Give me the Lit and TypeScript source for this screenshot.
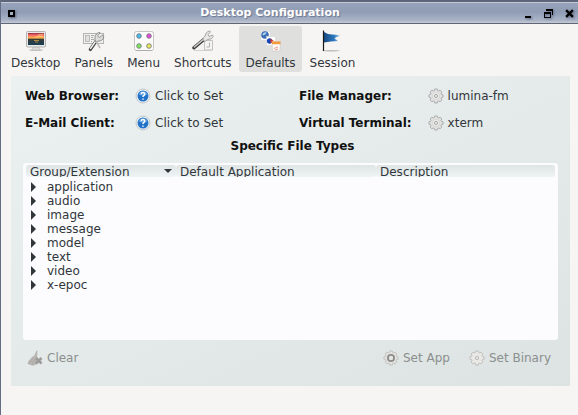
import { LitElement, html, css, TemplateResult } from "lit";
import { customElement, state } from "lit/decorators.js";
import { classMap } from "lit/directives/class-map.js";

const GEAR =
  "M6.7 1h2.6l.4 1.7 1.2.5 1.5-.9 1.8 1.8-.9 1.5.5 1.2 1.7.4v2.6l-1.7.4-.5 1.2.9 1.5-1.8 1.8-1.5-.9-1.2.5-.4 1.7H6.7l-.4-1.7-1.2-.5-1.5.9-1.8-1.8.9-1.5-.5-1.2L.5 9.8V7.2l1.7-.4.5-1.2-.9-1.5 1.8-1.8 1.5.9 1.2-.5z";

const icons: Record<string, TemplateResult> = {
  desktop: html`<svg class="big" viewBox="0 0 22 22">
    <defs>
      <linearGradient id="sky" x1="0" y1="0" x2="0" y2="1">
        <stop offset="0" stop-color="#8a2a38" /><stop offset=".15" stop-color="#f0606c" />
        <stop offset=".42" stop-color="#ffb648" /><stop offset=".52" stop-color="#3a3c34" />
        <stop offset="1" stop-color="#16405a" />
      </linearGradient>
    </defs>
    <ellipse cx="11" cy="20" rx="7" ry="1" fill="#c4c4c2" />
    <path d="M8 17h6l1 3H7z" fill="#dcdcda" stroke="#b4b4b2" stroke-width=".5" />
    <rect x="1.5" y="1.5" width="19" height="15.5" rx="1" fill="#e8e8e6" stroke="#b4b4b2" />
    <rect x="3" y="3" width="16" height="12" fill="url(#sky)" />
    <path d="M10 7.500q4-2 8-1M13 5q3 0 5-1" stroke="#ffda7a" stroke-width=".8" fill="none" />
    <path d="M9 10.500h5M10 12h3" stroke="#c89a4a" stroke-width=".8" />
  </svg>`,
  panels: html`<svg class="big" viewBox="0 0 22 22">
    <rect x=".5" y="3.5" width="20" height="10" fill="#f1f1f0" stroke="#b4b4b2" />
    <rect x="2.5" y="5.5" width="4" height="6" fill="#e0e0de" stroke="#aaa" stroke-width=".7" />
    <path d="M8 5.500h3M8 7.500h2M8 9.500h3M8 11.500h1" stroke="#999" stroke-width=".8" />
    <path d="M7.300 19.500l5.500-8" stroke="#4a4a4a" stroke-width="3.200" stroke-linecap="round" />
    <path d="M7.600 18.400l5-7.200" stroke="#efefed" stroke-width="1.600" stroke-linecap="round" />
    <path d="M12 9.5q-.8-5 3.6-7l1.600.3-2.600 3 1.600 1.800L19.800 5l1 1.800q-1 4.600-6.300 4.400l-1.500 1.400z" fill="#dededc" stroke="#858583" stroke-width=".9" />
    <path d="M13.500 12l3.500 6" stroke="#bcbcba" stroke-width="1.600" />
  </svg>`,
  menu: html`<svg class="big" viewBox="0 0 22 22">
    <rect x="1.5" y="1.5" width="19" height="19" rx="2" fill="#fbfbfb" stroke="#c4c4c2" />
    <path d="M3 20.500h16" stroke="#adadab" />
    <g stroke="#77777d" stroke-width=".9">
      <circle cx="6" cy="6" r="2.300" fill="#42bdf0" /><circle cx="16" cy="6" r="2.300" fill="#e846dc" />
      <circle cx="6" cy="16" r="2.300" fill="#7de85a" /><circle cx="16" cy="16" r="2.300" fill="#ecec5a" />
    </g>
  </svg>`,
  shortcuts: html`<svg class="big" viewBox="0 0 22 22">
    <path d="M12.500 10.500h8v9.500h-8z" fill="#f4f4f3" stroke="#c1c1bf" />
    <path d="M17.500 12.500v4.500h-3" fill="none" stroke="#b0b0ae" stroke-width="1" />
    <path d="M2 20.500h18" stroke="#c9c9c7" stroke-width=".8" />
    <path d="M2 17.800l9.500-8" stroke="#3c3c3c" stroke-width="3.400" stroke-linecap="round" />
    <path d="M2.400 17l9-7.600" stroke="#cfcfcd" stroke-width="1.400" stroke-linecap="round" />
    <path d="M11 10q-.6-2 2.200-4 .2-4 4.500-5l1 .8-2.800 2.700 1.200 2L20.500 5l.8 1.400Q20.300 9.600 15.500 9.500L13 11.500z" fill="#e8e8e6" stroke="#9b9b99" stroke-width=".9" />
  </svg>`,
  defaults: html`<svg class="big" viewBox="0 0 22 22">
    <path d="M1 1.500h9v9H1z" fill="#fff" stroke="#d0d0ce" stroke-width=".5" />
    <circle cx="5" cy="5" r="3.800" fill="#3a6cb4" />
    <path d="M2.500 4q2-2.800 4.200-1.400Q5.500 5 3 5.500zM6 5.500q2.200 0 1.500 2.200" fill="#b4d4f2" />
    <path d="M6.500 6.500h9v9h-9z" fill="#fff" stroke="#d0d0ce" stroke-width=".5" />
    <circle cx="9.600" cy="11" r="2.700" fill="#1746b8" />
    <path d="M10.500 8.800l3.500 2.200-3.500 2.600z" fill="#dc3428" />
    <path d="M12 11.500h8.500l-.6 9.500h-7.500z" fill="#fcf8f6" stroke="#c8c8c6" stroke-width=".6" />
    <path d="M12 11.500h8.500v2.700H12z" fill="#f59a3c" />
    <path d="M14 18.500l4-1.500M15 20l3-1" stroke="#e8a09a" stroke-width="1" />
  </svg>`,
  session: html`<svg class="big" viewBox="0 0 22 22">
    <defs>
      <linearGradient id="flag" x1="0" y1="0" x2="1" y2="0">
        <stop offset="0" stop-color="#174a80" /><stop offset=".6" stop-color="#2c76bd" />
        <stop offset="1" stop-color="#9cc4e4" />
      </linearGradient>
    </defs>
    <ellipse cx="10" cy="20.800" rx="9" ry=".7" fill="#bcbcba" />
    <path d="M3 2q4 2.500 8 2.500 4 0 8 1.300-4 1-5.500 2.700 2 1 3.500 2.500Q10 11 3 12.500z" fill="url(#flag)" />
    <path d="M2.500 .5v20.500" stroke="#191919" stroke-width="1.200" />
  </svg>`,
  help: html`<svg class="small" viewBox="0 0 16 16">
    <circle cx="8" cy="8" r="7" fill="#f2f5f8" stroke="#c2c6ca" />
    <circle cx="8" cy="8" r="5.500" fill="#2272c8" />
    <path d="M3.500 6.500a4.700 4.700 0 0 1 9 0q-4.500 2-9 0z" fill="#5c9fe0" />
    <path d="M6.200 6.300q.1-1.700 1.800-1.700t1.800 1.500q0 1-1.700 2v.8M8 10.500v1.300" fill="none" stroke="#fff" stroke-width="1.500" />
  </svg>`,
  gear: html`<svg class="small" viewBox="0 0 16 17">
    <path d=${GEAR} fill="#e2e2e1" stroke="#a3a5a5" stroke-width=".9" />
    <circle cx="8" cy="8.500" r="4" fill="#ececeb" stroke="#c9c9c8" stroke-width=".6" />
    <circle cx="8" cy="8.500" r="1.700" fill="#e4e8e8" stroke="#9c9e9e" stroke-width=".9" />
  </svg>`,
  app: html`<svg class="small" viewBox="0 0 16 17">
    <path d=${GEAR} fill="#e4e3e0" stroke="#bcbcb9" stroke-width=".9" />
    <circle cx="8" cy="8.500" r="3.300" fill="#e6e6e4" stroke="#8c8c8a" stroke-width="1.900" />
  </svg>`,
  binary: html`<svg class="small" viewBox="0 0 16 17">
    <path d=${GEAR} fill="#eae8e5" stroke="#b9b8b5" stroke-width=".9" />
    <circle cx="8" cy="8.500" r="1.800" fill="#e4e6e4" stroke="#b3b3b0" stroke-width=".9" />
  </svg>`,
  clear: html`<svg class="small" viewBox="0 0 16 16">
    <path d="M9.500.5l1 .3-.4 6 1.500 3-2.300 4.700-3.500 1.300L.5 14l1-3 4-4.500 1.500-.5z" fill="#b8b5b2" />
    <path d="M2 13.500l4-5M5 14.500l3-5" stroke="#a8a5a2" stroke-width=".7" />
    <path d="M9 8l5.500 5.500M14.500 8l-5.500 5.500" stroke="#9c9b99" stroke-width="2.600" />
  </svg>`,
};

const sections = ["Desktop", "Panels", "Menu", "Shortcuts", "Defaults", "Session"];
const fields = [
  [
    { id: "web", label: "Web Browser:", icon: "help", value: "Click to Set" },
    { id: "mail", label: "E-Mail Client:", icon: "help", value: "Click to Set" },
  ],
  [
    { id: "files", label: "File Manager:", icon: "gear", value: "lumina-fm" },
    { id: "term", label: "Virtual Terminal:", icon: "gear", value: "xterm" },
  ],
];
const groups = ["application", "audio", "image", "message", "model", "text", "video", "x-epoc"];

@customElement("app-root")
export class AppRoot extends LitElement {
  @state() private section = "Defaults";

  static styles = css`
    :host {
      display: flex;
      flex-direction: column;
      box-sizing: border-box;
      min-height: 100vh;
      border-left: 1px solid #656d85;
      background: #f7f5f3;
      color: #31363b;
      font: 12px/14px "DejaVu Sans", sans-serif;
    }
    button {
      display: inline-flex;
      align-items: center;
      margin: 0;
      padding: 0;
      border: 0;
      background: none;
      color: inherit;
      font: inherit;
    }
    svg { display: block; flex: none; }
    .big { width: 22px; height: 22px; }
    .small { width: 16px; height: 16px; }
    .titlebar {
      display: grid;
      grid-template-columns: 12px 1fr 56px;
      align-items: center;
      box-sizing: border-box;
      height: 24px;
      padding: 0 2px 0 7px;
      border-top: 2px solid #5d657a;
      border-bottom: 1px solid #5f6677;
      background: linear-gradient(#c5c9d3 0 1px, #97a3ba 1px, #8f9cb4 10px, #a6b1c5 17px, #adb6c8 19px, #c0c5d0 20px);
    }
    .title {
      margin: 0;
      color: #fff;
      font-size: 11px;
      line-height: 14px;
      text-align: center;
      text-shadow: 1px 1px 1px #6b768f;
    }
    .controls { display: flex; justify-content: flex-end; gap: 9px; padding-top: 2px; }
    .glyph { width: 12px; height: 12px; filter: drop-shadow(1px 1px 1px #5a6480); }
    .menu-button { padding-top: 2px; }
    .toolbar { display: flex; gap: 2px; padding: 2px 4px 4px; }
    .tool {
      flex-direction: column;
      gap: 4px;
      padding: 4px 6px 2px;
      border-radius: 3px;
      color: #31363b;
    }
    .tool.active { background: #dfdfdd; }
    .panel {
      display: flex;
      flex: 1;
      flex-direction: column;
      margin: 0 8px 29px 10px;
      padding: 12px 12px 20px;
      background: linear-gradient(155deg, #eaf1f0, #e3e9e8 60%, #dce3e2);
    }
    .fields { display: grid; grid-template-columns: 1fr 1fr; margin: 0 -12px 0 2px; column-gap: 3px; }
    .pair { display: grid; grid-template-columns: auto 1fr; align-content: start; gap: 11px 16px; }
    .pair label { padding: 1px 0; color: #111; font-weight: bold; }
    .value { gap: 4px; }
    .heading { margin: 8px 0 10px; padding-left: 4px; color: #111; font-size: 12px; line-height: 14px; text-align: center; }
    .tree { flex: 1; padding: 2px 3px; border-radius: 3px; background: #fcfcfe; }
    .types { width: 100%; border-collapse: collapse; table-layout: fixed; }
    .types th { padding: 0; font-weight: normal; text-align: left; }
    .first { width: 150px; }
    .second { width: 200px; }
    .head {
      display: flex;
      align-items: flex-start;
      justify-content: space-between;
      height: 12px;
      padding: 0 4px;
      overflow: hidden;
      border-radius: 3px;
      background: linear-gradient(#dfe5e5, #eef4f4);
    }
    .caret { align-self: center; }
    .types tbody::before { content: ""; display: block; height: 3px; }
    .types td { height: 14px; padding: 0 0 0 5px; }
    .group { display: flex; gap: 11px; }
    .actions { display: flex; gap: 19px; padding-top: 10px; margin: 0 7px 0 4px; color: #8b8f8f; }
    .actions button { gap: 4px; }
    .actions .clear { margin-right: auto; }
  `;

  render() {
    return html`
      <header class="titlebar">
        <button class="menu-button" aria-label="Window menu">
          <svg class="glyph" viewBox="0 0 12 12"><rect x="1" y="3" width="5" height="5" fill="#9dadc4" stroke="#000" stroke-width="2" /></svg>
        </button>
        <h1 class="title">Desktop Configuration</h1>
        <div class="controls">
          <button aria-label="Minimize">
            <svg class="glyph" viewBox="0 0 12 12"><path d="M3 8h6v2H3z" /></svg>
          </button>
          <button aria-label="Restore">
            <svg class="glyph" viewBox="0 0 12 12"><path d="M3 1h7v6H9V3H3zM1 4h7v6H1zM2 6v3h5V6z" fill-rule="evenodd" /></svg>
          </button>
          <button aria-label="Close">
            <svg class="glyph" viewBox="0 0 12 12"><path d="M3 3l5 5M8 3l-5 5" stroke="#000" stroke-width="2.400" stroke-linecap="square" /></svg>
          </button>
        </div>
      </header>
      <nav class="toolbar">
        ${sections.map(
          (name) => html`<button
            class=${classMap({ tool: true, active: name === this.section })}
            @click=${() => (this.section = name)}
          >${icons[name.toLowerCase()]}<span>${name}</span></button>`
        )}
      </nav>
      <main class="panel">
        <div class="fields">
          ${fields.map(
            (column) => html`<div class="pair">
              ${column.map(
                (f) => html`<label for=${f.id}>${f.label}</label>
                  <button class="value" id=${f.id}>${icons[f.icon]}${f.value}</button>`
              )}
            </div>`
          )}
        </div>
        <h2 class="heading">Specific File Types</h2>
        <div class="tree">
          <table class="types">
            <thead>
              <tr>
                <th class="first">
                  <div class="head">Group/Extension<svg class="caret" width="8" height="4" viewBox="0 0 8 4"><path d="M0 0h8L4 4z" fill="#31363b" /></svg></div>
                </th>
                <th class="second"><div class="head">Default Application</div></th>
                <th><div class="head">Description</div></th>
              </tr>
            </thead>
            <tbody>
              ${groups.map(
                (g) => html`<tr>
                  <td colspan="3">
                    <button class="group" aria-expanded="false">
                      <svg width="5" height="10" viewBox="0 0 5 10"><path d="M0 0l5 5-5 5z" fill="#31363b" /></svg>${g}
                    </button>
                  </td>
                </tr>`
              )}
            </tbody>
          </table>
        </div>
        <div class="actions">
          <button class="clear" disabled>${icons.clear}Clear</button>
          <button disabled>${icons.app}Set App</button>
          <button disabled>${icons.binary}Set Binary</button>
        </div>
      </main>
    `;
  }
}
